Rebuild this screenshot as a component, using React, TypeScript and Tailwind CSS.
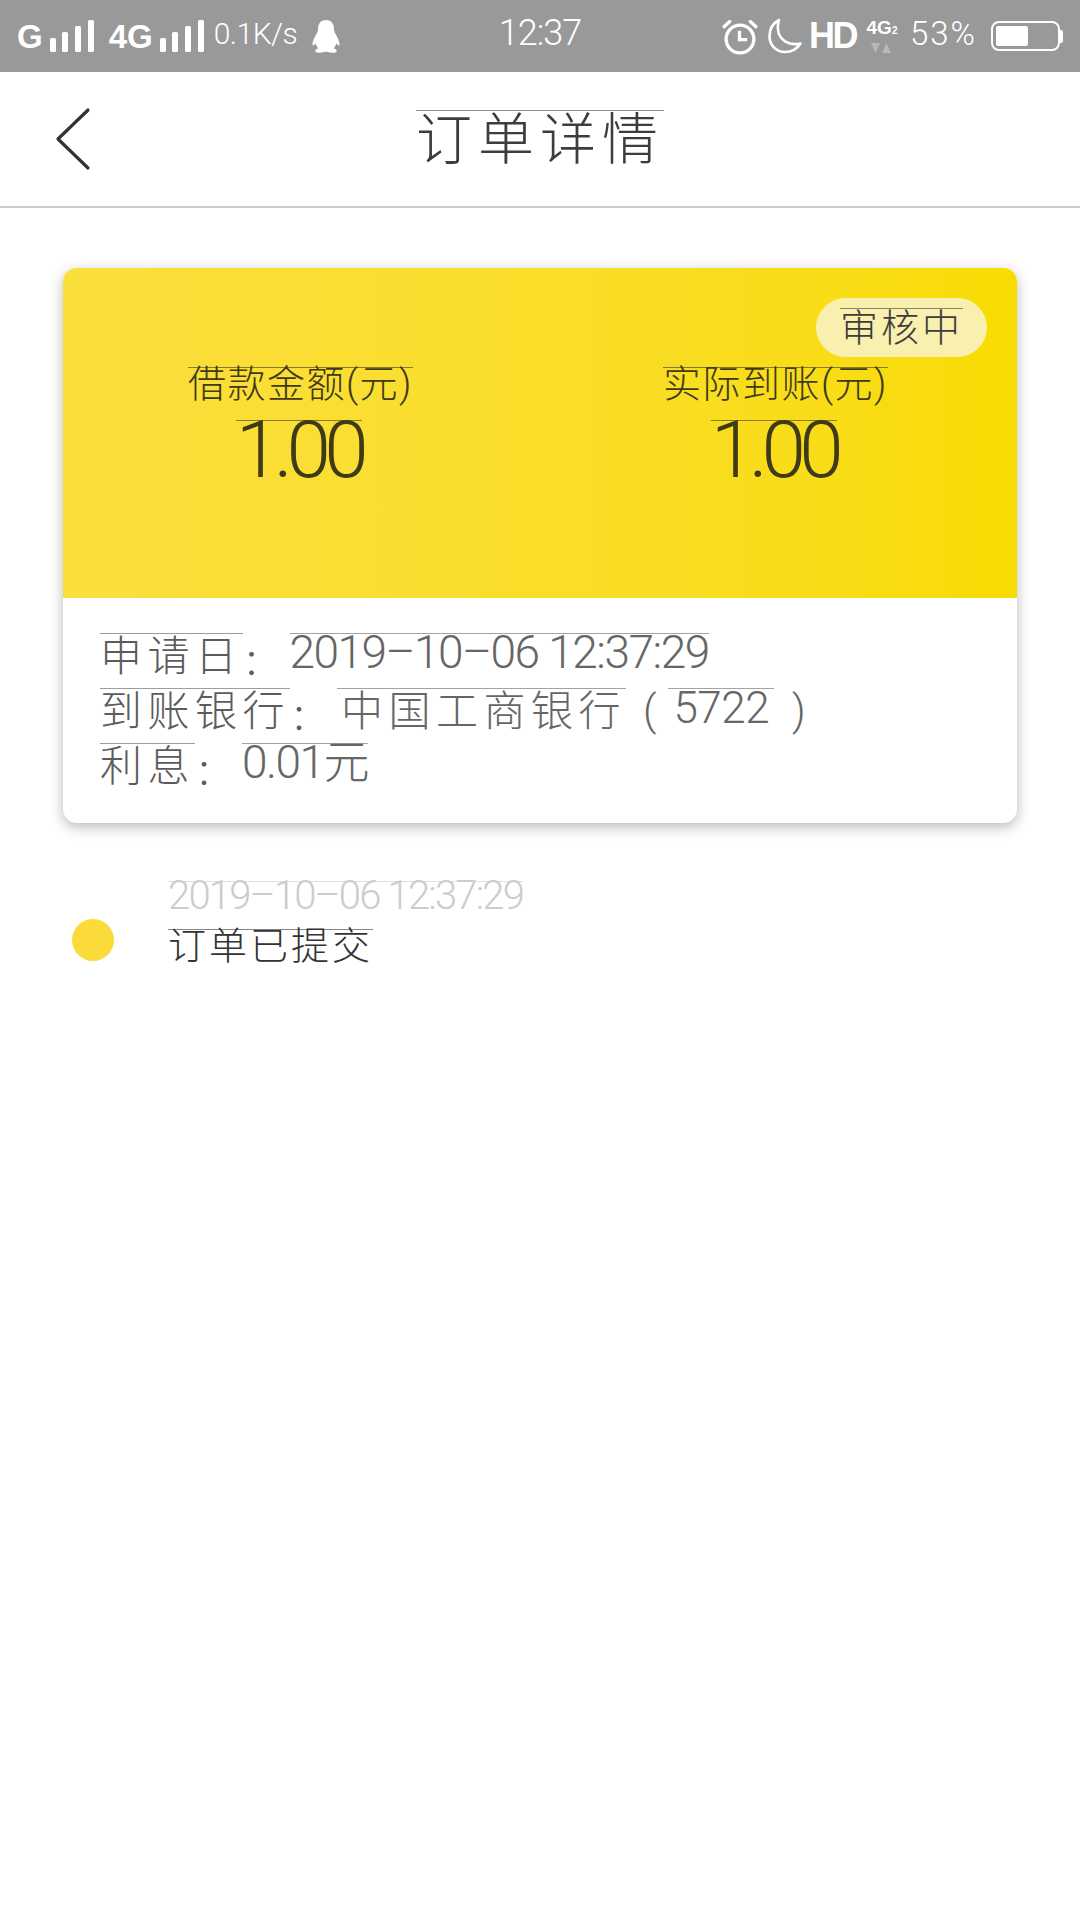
const FONT = "font-['Roboto','Noto_Sans_CJK_SC',sans-serif]";

/** thin rule sitting on top of a text run, as in the screenshot */
function Run({ children, className = "" }: { children: React.ReactNode; className?: string }) {
  return <span className={`inline-block border-t border-current/60 ${className}`}>{children}</span>;
}

function Signal() {
  return (
    <svg width="44" height="32" viewBox="0 0 44 32" fill="white">
      <rect x="0" y="18" width="6" height="14" rx="1.5" />
      <rect x="12" y="12" width="6" height="20" rx="1.5" />
      <rect x="25" y="6" width="6" height="26" rx="1.5" />
      <rect x="38" y="0" width="6" height="32" rx="1.5" />
    </svg>
  );
}

function Penguin() {
  return (
    <svg width="28" height="33" viewBox="0 0 28 33" fill="white" className="ml-[15px]">
      <path d="M14 0c-5.500 0-8 4.200-8 9 0 2-.6 3.400-1.800 5.600C2.400 17.800 0 22.500 .6 25.200c.8 1 2.200-.6 3-2 .5 2 1.400 3.600 2.800 5-1.800.6-3.400 1.600-3 3.200.3 1.300 3.400 1.600 6 1.200 1.600-.3 3-.9 4.600-.9s3 .6 4.600.9c2.600.4 5.700.1 6-1.200.4-1.600-1.200-2.600-3-3.200 1.400-1.400 2.300-3 2.800-5 .8 1.400 2.200 3 3 2 .6-2.700-1.800-7.400-3.600-10.600C22.600 12.400 22 11 22 9c0-4.800-2.500-9-8-9z" />
    </svg>
  );
}

function Alarm() {
  return (
    <svg width="36" height="36" viewBox="0 0 35 35" fill="none" stroke="white" strokeWidth="3.200" className="mt-[1px]">
      <circle cx="17.500" cy="19.500" r="13.500" />
      <path d="M17 11.500v8.500h7.500" />
      <path d="M2 7.500 7.500 2.500M33 7.500 27.500 2.500" strokeLinecap="round" />
    </svg>
  );
}

function Moon() {
  return (
    <svg width="34" height="36" viewBox="0 0 34 36" fill="none" stroke="white" strokeWidth="2.600" className="ml-[10px]">
      <path d="M11 2C4.500 5.500 1.500 11 1.500 18c0 9 6.500 16 15.500 16 6.500 0 12-3 15.500-8.500-11 2.500-21.500-3-22.500-14C9.700 8 10 5 11 2z" strokeLinejoin="round" />
    </svg>
  );
}

function NetBadge() {
  return (
    <div className="ml-[8px] flex w-[36px] flex-col items-center">
      <div className="flex items-baseline font-['Liberation_Sans',sans-serif] text-[19px] leading-[18px] font-bold text-white">
        4G<span className="text-[10px] leading-none">2</span>
      </div>
      <svg width="22" height="10" viewBox="0 0 22 10" fill="white" opacity="0.3" className="mt-[6px]">
        <path d="M0 0h9L4.500 10zM11 10h9L15.500 0z" />
      </svg>
    </div>
  );
}

function Battery() {
  return (
    <div className="ml-[14px] flex items-center">
      <div className="h-[30px] w-[69px] rounded-[8px] border-2 border-white p-[3px]">
        <div className="h-full w-[55%] rounded-[2px] bg-white" />
      </div>
      <div className="h-[13px] w-[3px] rounded-r-[2px] bg-white" />
    </div>
  );
}

function StatusBar() {
  return (
    <div className="grid h-[72px] grid-cols-[1fr_auto_1fr] items-center bg-[#999999] pr-[17px] pl-[17px] text-white">
      <div className="flex items-center">
        <span className="mr-[7px] font-['Liberation_Sans',sans-serif] text-[33px] leading-none font-bold">G</span>
        <Signal />
        <span className="mr-[7px] ml-[15px] font-['Liberation_Sans',sans-serif] text-[33px] leading-none font-bold">4G</span>
        <Signal />
        <span className="mb-[5px] ml-[10px] text-[30px] leading-none font-light tracking-[-0.5px]">0.1K/s</span>
        <Penguin />
      </div>
      <span className="mb-[6px] text-[36px] leading-none font-light tracking-[-1px]">12:37</span>
      <div className="flex items-center justify-end">
        <Alarm />
        <Moon />
        <span className="ml-[7px] font-['Liberation_Sans',sans-serif] text-[36px] leading-none font-bold tracking-[-2.500px]">HD</span>
        <NetBadge />
        <span className="mb-[5px] ml-[10px] text-[33px] leading-none font-light tracking-[2px]">53%</span>
        <Battery />
      </div>
    </div>
  );
}

function NavBar() {
  return (
    <div className="grid h-[136px] grid-cols-[1fr_auto_1fr] items-center border-b-2 border-[#cccccc] bg-white">
      <svg width="36" height="64" viewBox="0 0 36 64" fill="none" stroke="#333333" strokeWidth="3.200" strokeLinecap="round" strokeLinejoin="round" className="ml-[55px]">
        <path d="M33 3 3 32l30 29" />
      </svg>
      <Run className="text-[56px] leading-[58px] font-light tracking-[6px] text-[#3d3d3d]">订单详情</Run>
    </div>
  );
}

function Amount({ label, value }: { label: string; value: string }) {
  return (
    <div className="flex flex-col items-center pt-[99px] text-[#3f3a18]">
      <Run className="text-[38px] leading-[33px] font-light tracking-[1.500px]">{label}</Run>
      <Run className="mt-[19px] -ml-[3px] text-[80px] leading-[58px] font-light tracking-[-6.500px]">{value}</Run>
    </div>
  );
}

function InfoRow({ label, children }: { label: string; children: React.ReactNode }) {
  return (
    <div className="flex h-[55px] items-start">
      <Run className="text-[42px] leading-[46px] font-light tracking-[5.500px] text-[#5c5c5c]">{label}</Run>
      <span className="mt-[7px] w-[47px] text-[36px] leading-[46px] font-light text-[#5c5c5c]">：</span>
      {children}
    </div>
  );
}

function Card() {
  return (
    <div className="overflow-hidden rounded-[14px] bg-white shadow-[0_4px_14px_rgba(0,0,0,0.28)]">
      <div className="relative grid h-[330px] grid-cols-2 bg-gradient-to-r from-[#fbdf3c] to-[#f8dc00] pr-[4px]">
        <Amount label="借款金额(元)" value="1.00" />
        <Amount label="实际到账(元)" value="1.00" />
        <div className="absolute top-[30px] right-[30px] flex h-[59px] w-[171px] items-start justify-center rounded-full bg-[#f9efae] pt-[10px]">
          <Run className="text-[38px] leading-[38px] font-light tracking-[3px] text-[#3d3d3d]">审核中</Run>
        </div>
      </div>
      <div className="h-[225px] pt-[35px] pl-[37px] text-[#666666]">
        <InfoRow label="申请日">
          <Run className="text-[46px] leading-[36px] font-light tracking-[-1.500px]">2019–10–06 12:37:29</Run>
        </InfoRow>
        <InfoRow label="到账银行">
          <Run className="pl-[4px] text-[42px] leading-[46px] font-light tracking-[5.500px]">中国工商银行</Run>
          <span className="ml-[17px] text-[42px] leading-[46px] font-light">(</span>
          <Run className="ml-[12px] px-[5px] text-[44px] leading-[38px] font-light tracking-[-0.500px]">5722</Run>
          <span className="ml-[18px] text-[42px] leading-[46px] font-light">)</span>
        </InfoRow>
        <InfoRow label="利息">
          <Run className="text-[46px] leading-[36px] font-light tracking-[-1.500px]">0.01元</Run>
        </InfoRow>
      </div>
    </div>
  );
}

export default function App() {
  return (
    <div className={`h-[1920px] w-[1080px] bg-white ${FONT}`}>
      <StatusBar />
      <NavBar />
      <div className="px-[63px] pt-[60px]">
        <Card />
        <div className="mt-[58px] flex items-start gap-[54px] pl-[9px]">
          <div className="mt-[38px] h-[42px] w-[42px] rounded-full bg-[#fbdb3a]" />
          <div className="flex flex-col items-start">
            <Run className="text-[40px] leading-[28px] font-light tracking-[-1.800px] text-[#cccccc]">2019–10–06 12:37:29</Run>
            <Run className="mt-[19px] text-[38px] leading-[32px] font-light tracking-[3px] text-[#333333]">订单已提交</Run>
          </div>
        </div>
      </div>
    </div>
  );
}
